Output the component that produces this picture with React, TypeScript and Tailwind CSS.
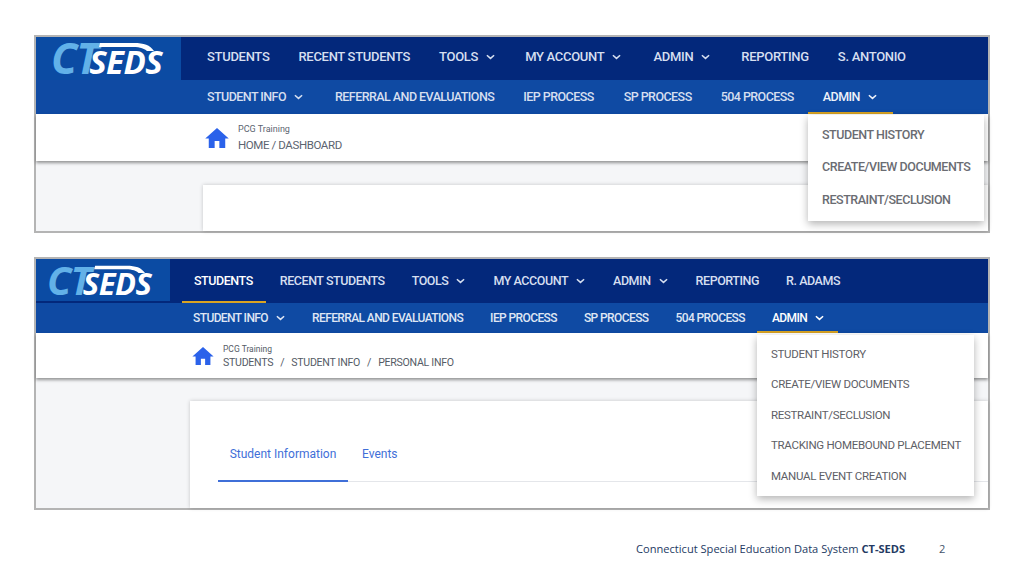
import React from "react";

const font = "font-['Roboto',sans-serif]";

function Chevron({ className = "" }: { className?: string }) {
  return (
    <svg viewBox="0 0 10 6" className={"w-[9px] h-[6px] " + className} fill="none" stroke="currentColor" strokeWidth="1.7">
      <path d="M1 1l4 3.6L9 1" />
    </svg>
  );
}

function Home({ className = "" }: { className?: string }) {
  return (
    <svg viewBox="2 3 20 17" className={className} fill="#2b62ea">
      <path d="M10 20v-6h4v6h5v-8h3L12 3 2 12h3v8z" />
    </svg>
  );
}

function Logo({ className, ctClass, sedsClass }: { className: string; ctClass: string; sedsClass: string }) {
  return (
    <div className={"relative flex items-end shrink-0 bg-[#0b4ba3] " + className}>
      <span className="relative top-[3px] font-['Open_Sans',sans-serif] italic font-bold flex items-baseline">
        <span className={"text-[#62b1e8] " + ctClass}>CT</span>
        <span className={"text-white " + sedsClass}>SEDS</span>
      </span>
      <svg viewBox="0 0 145 43" className="absolute inset-0 w-full h-full" fill="#ffffff">
        <path d="M64 6H98C108 6 114 8 118 14H111C107 10.500 102 10 95 10H63Z" />
      </svg>
    </div>
  );
}

function Item({ label, chevron, className = "" }: { label: string; chevron?: boolean; className?: string }) {
  return (
    <span className={"flex items-center whitespace-nowrap " + className}>
      {label}
      {chevron && <Chevron className="ml-[8px]" />}
    </span>
  );
}

function Menu({ items, className, itemClass }: { items: string[]; className: string; itemClass: string }) {
  return (
    <div className={"absolute z-10 bg-white shadow-[0_3px_8px_rgba(0,0,0,0.3)] flex flex-col text-[#5e6066] " + className}>
      {items.map((t) => (
        <div key={t} className={"whitespace-nowrap flex items-center " + itemClass}>{t}</div>
      ))}
    </div>
  );
}

function Frame1() {
  return (
    <div className="relative w-[956px] h-[198px] mx-auto border-2 border-[#b4b4b4] bg-[#f5f6f8] flex flex-col">
      <div className="flex h-[43px] bg-[#03287b] text-[#d6dff0] text-[13px] font-medium tracking-[-0.3px]">
        <Logo
          className="w-[145px] h-[43px] pl-[15px] leading-[43px]"
          ctClass="text-[43px] tracking-[-1px]"
          sedsClass="text-[33px] tracking-[-0.5px] ml-[-9px]"
        />
        <div className="flex items-center gap-[29px] ml-[26px] pb-[4px]">
          <Item label="STUDENTS" />
          <Item label="RECENT STUDENTS" />
          <Item label="TOOLS" chevron />
          <Item label="MY ACCOUNT" chevron className="ml-[1px]" />
          <Item label="ADMIN" chevron className="ml-[3px]" />
          <Item label="REPORTING" className="ml-[2px]" />
          <Item label="S. ANTONIO" />
        </div>
      </div>
      <div className="flex h-[34px] bg-[#0f4aa3] text-[#d6dff0] text-[12.5px] font-medium tracking-[-0.55px] pl-[171px] relative">
        <div className="flex items-center gap-[29px]">
          <Item label="STUDENT INFO" chevron />
          <Item label="REFERRAL AND EVALUATIONS" className="ml-[3px]" />
          <Item label="IEP PROCESS" />
          <Item label="SP PROCESS" className="ml-[1px]" />
          <Item label="504 PROCESS" />
          <Item label="ADMIN" chevron className="text-[#eef2fa]" />
        </div>
        <div className="absolute left-[772px] bottom-0 w-[85px] h-[2px] bg-[#d9a423]" />
      </div>
      <div className="h-[47px] bg-white shadow-[0_2px_3px_rgba(0,0,0,0.4)] flex items-center pl-[169px] gap-[9px] relative">
        <Home className="w-[24px] h-[20px]" />
        <div className="flex flex-col text-[#5c6470] pt-[1px]">
          <span className="text-[9px] leading-[11px]">PCG Training</span>
          <span className="text-[11.5px] leading-[16px] mt-[2px] tracking-[-0.4px]">HOME / DASHBOARD</span>
        </div>
      </div>
      <div className="flex-1 pt-[24px] pl-[167px]">
        <div className="h-full bg-white shadow-[0_0_4px_rgba(0,0,0,0.2)]" />
      </div>
      <Menu
        className="left-[772px] top-[78px] w-[176px] h-[106px] pl-[14px] pt-[4px] text-[12.5px] tracking-[-0.45px] font-medium text-[#6a6c72]"
        itemClass="h-[32.5px]"
        items={["STUDENT HISTORY", "CREATE/VIEW DOCUMENTS", "RESTRAINT/SECLUSION"]}
      />
    </div>
  );
}

function Frame2() {
  return (
    <div className="relative w-[956px] h-[253px] mx-auto border-2 border-[#b4b4b4] bg-[#f5f6f8] flex flex-col">
      <div className="flex h-[44px] bg-[#03287b] text-[#d6dff0] text-[12.5px] font-medium tracking-[-0.45px] relative">
        <Logo
          className="w-[134px] h-[42px] pl-[11px] leading-[42px]"
          ctClass="text-[40px] tracking-[-1px]"
          sedsClass="text-[31px] tracking-[-0.5px] ml-[-8px]"
        />
        <div className="flex items-center gap-[27px] ml-[24px]">
          <Item label="STUDENTS" className="text-white" />
          <Item label="RECENT STUDENTS" />
          <Item label="TOOLS" chevron />
          <Item label="MY ACCOUNT" chevron className="ml-[1px]" />
          <Item label="ADMIN" chevron className="ml-[1px]" />
          <Item label="REPORTING" className="ml-[1px]" />
          <Item label="R. ADAMS" />
        </div>
        <div className="absolute left-[146px] bottom-0 w-[84px] h-[2px] bg-[#d9a423]" />
      </div>
      <div className="flex h-[30px] bg-[#0f4aa3] text-[#dfe6f4] text-[12px] font-medium tracking-[-0.6px] pl-[157px] relative">
        <div className="flex items-center gap-[27px]">
          <Item label="STUDENT INFO" chevron />
          <Item label="REFERRAL AND EVALUATIONS" />
          <Item label="IEP PROCESS" />
          <Item label="SP PROCESS" />
          <Item label="504 PROCESS" />
          <Item label="ADMIN" chevron className="text-white" />
        </div>
        <div className="absolute left-[721px] bottom-0 w-[81px] h-[2px] bg-[#d9a423]" />
      </div>
      <div className="h-[45px] bg-white shadow-[0_2px_3px_rgba(0,0,0,0.4)] flex items-center pl-[156px] gap-[9px] relative">
        <Home className="w-[22px] h-[18px]" />
        <div className="flex flex-col text-[#555b66] pt-[3px]">
          <span className="text-[8.5px] leading-[10px]">PCG Training</span>
          <span className="flex gap-[7px] text-[10.6px] leading-[14px] mt-[2px] whitespace-nowrap tracking-[-0.28px]">
            <span>STUDENTS</span>
            <span>/</span>
            <span>STUDENT INFO</span>
            <span>/</span>
            <span>PERSONAL INFO</span>
          </span>
        </div>
      </div>
      <div className="flex-1 pt-[23px] pl-[154px]">
        <div className="h-full bg-white shadow-[0_0_4px_rgba(0,0,0,0.2)] pt-[29px] pl-[28px]">
          <div className="flex border-b border-[#e4e6ea] h-[52px] text-[12px] text-[#3f6fd8]">
            <span className="relative w-[130px] flex justify-center pt-[15px] h-[52px] border-b-2 border-[#3f6fd8] whitespace-nowrap">Student Information</span>
            <span className="ml-[14px] pt-[15px]">Events</span>
          </div>
        </div>
      </div>
      <Menu
        className="left-[721px] top-[76px] w-[217px] h-[161px] pl-[14px] pt-[4px] text-[11.5px] tracking-[-0.3px]"
        itemClass="h-[30.5px]"
        items={["STUDENT HISTORY", "CREATE/VIEW DOCUMENTS", "RESTRAINT/SECLUSION", "TRACKING HOMEBOUND PLACEMENT", "MANUAL EVENT CREATION"]}
      />
    </div>
  );
}

export default function App() {
  return (
    <div className={"w-[1024px] h-[576px] bg-white overflow-hidden flex flex-col pt-[35px] " + font}>
      <div className="w-[956px] ml-[34px] flex flex-col gap-[24px]">
        <Frame1 />
        <Frame2 />
      </div>
      <div className="w-[956px] ml-[33px] mt-[31px] flex font-['Open_Sans',sans-serif] text-[11.1px] text-[#243a63]">
        <span className="ml-[603px] w-[303px] whitespace-nowrap">
          Connecticut Special Education Data System <b>CT-SEDS</b>
        </span>
        <span className="text-[#44546a]">2</span>
      </div>
    </div>
  );
}
